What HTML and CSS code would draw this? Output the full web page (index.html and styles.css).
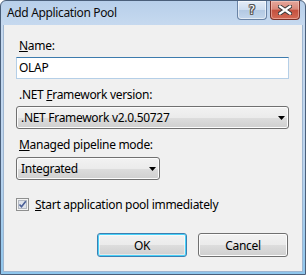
FILE: index.html
```html
<!DOCTYPE html>
<html>
<head>
<meta charset="utf-8">
<link rel="stylesheet" href="styles.css">
</head>
<body>
<div class="window">
  <div class="titlebar">
    <span class="title">Add Application Pool</span>
    <div class="caption-buttons">
      <div class="cap-btn help"><span class="help-glyph">?</span></div>
      <div class="cap-btn close">
        <svg width="14" height="10" viewBox="0 0 14 10">
          <path d="M2 1.5 L12 8.5 M12 1.5 L2 8.5" stroke="#3a3a3a" stroke-width="4.2" stroke-linecap="square" fill="none"/>
          <path d="M2 1.5 L12 8.5 M12 1.5 L2 8.5" stroke="#ffffff" stroke-width="2.2" stroke-linecap="square" fill="none"/>
        </svg>
      </div>
    </div>
  </div>
  <div class="client">
    <div class="label"><u>N</u>ame:</div>
    <div class="textbox">OLAP</div>
    <div class="label label-gap">.NET <u>F</u>ramework version:</div>
    <div class="combo combo-wide">
      <span>.NET Framework v2.0.50727</span>
      <svg class="arrow" width="7" height="4" viewBox="0 0 7 4"><path d="M0 0 H7 L3.5 4 Z" fill="#000"/></svg>
    </div>
    <div class="label label-gap"><u>M</u>anaged pipeline mode:</div>
    <div class="combo combo-narrow">
      <span>Integrated</span>
      <svg class="arrow" width="7" height="4" viewBox="0 0 7 4"><path d="M0 0 H7 L3.5 4 Z" fill="#000"/></svg>
    </div>
    <div class="check-row">
      <span class="checkbox">
        <svg width="13" height="13" viewBox="0 0 13 13">
          <rect x="0.5" y="0.5" width="12" height="12" fill="#f4f4f4" stroke="#8e8f8f"/>
          <rect x="2.5" y="2.5" width="8" height="8" fill="#dfe3ea" stroke="#b4b9c2"/>
          <path d="M3.5 6.5 L5.5 8.8 L9.8 3.2" stroke="#4a5f97" stroke-width="1.6" fill="none"/>
        </svg>
      </span>
      <span class="check-label"><u>S</u>tart application pool immediately</span>
    </div>
    <div class="buttons">
      <div class="btn btn-default">OK</div>
      <div class="btn">Cancel</div>
    </div>
  </div>
</div>
</body>
</html>
```

FILE: styles.css
```css
html, body {
  margin: 0;
  padding: 0;
  background: #ffffff;
}

body {
  font-family: "Noto Sans", "Open Sans", sans-serif;
  font-size: 12px;
  letter-spacing: -0.3px;
  color: #000;
}

.window {
  width: 306px;
  height: 275px;
  box-sizing: border-box;
  border: 1px solid #4a5f7a;
  border-radius: 6px 6px 0 0;
  background: linear-gradient(#b7cfea 0px, #c6d9ef 24px, #bcd4ee 60%, #8fc6ec 100%);
  padding: 0 2px 2px 2px;
  display: flex;
  flex-direction: column;
}

.titlebar {
  height: 24px;
  flex: none;
  display: flex;
  align-items: flex-start;
  justify-content: space-between;
}

.title {
  margin-left: 4px;
  margin-top: 4px;
  line-height: 16px;
  font-size: 12px;
  letter-spacing: -0.35px;
  color: #0b0b0b;
}

.caption-buttons {
  display: flex;
  gap: 3px;
  margin-right: 3px;
}

.cap-btn {
  width: 30px;
  height: 19px;
  box-sizing: border-box;
  border-radius: 0 0 4px 4px;
  display: flex;
  align-items: center;
  justify-content: center;
}

.help {
  border: 1px solid #6983a5;
  border-top: none;
  background: linear-gradient(#e3ecf7 0%, #ccdcef 50%, #b3c9e3 52%, #c3d6ec 100%);
  box-shadow: inset 0 0 0 1px rgba(255,255,255,0.55);
}

.help-glyph {
  font-family: "DejaVu Sans", sans-serif;
  font-size: 12px;
  line-height: 13px;
  letter-spacing: 0;
  color: #fff;
  text-shadow: 1px 0 0 #555, -1px 0 0 #555, 0 1px 0 #555, 0 -1px 0 #555,
               1px 1px 0 #555, -1px -1px 0 #555, 1px -1px 0 #555, -1px 1px 0 #555;
}

.close {
  border: 1px solid #7a2f27;
  border-top: none;
  background: linear-gradient(#e5a79c 0%, #d9887a 45%, #c4513f 52%, #d46a55 100%);
  box-shadow: inset 0 0 0 1px rgba(255,220,210,0.45);
}

.client {
  flex: 1;
  background: #f0f0f0;
  border: 1px solid #9fb6d0;
  border-top: none;
  padding: 13px 13px 0 12px;
  display: flex;
  flex-direction: column;
}

.label {
  line-height: 15px;
  padding-left: 3px;
}

.label-gap {
  margin-top: 8px;
}

.textbox {
  margin-top: 4px;
  height: 22px;
  box-sizing: border-box;
  background: #fff;
  border: 1px solid #b5cfe7;
  border-top-color: #3d7bad;
  padding: 0 2px;
  line-height: 19px;
}

.combo {
  margin-top: 4px;
  height: 23px;
  box-sizing: border-box;
  border: 1px solid #707070;
  border-radius: 3px;
  background: linear-gradient(#f2f2f2 0%, #ebebeb 50%, #dddddd 51%, #cfcfcf 100%);
  box-shadow: inset 0 0 0 1px #fcfcfc;
  display: flex;
  align-items: center;
  justify-content: space-between;
  padding: 0 3px 0 4px;
}

.combo-narrow {
  width: 144px;
  margin-top: 5px;
}

.arrow {
  flex: none;
}

.check-row {
  margin-top: 18px;
  display: flex;
  align-items: center;
  gap: 6px;
  height: 13px;
}

.checkbox {
  width: 13px;
  height: 13px;
  display: block;
  flex: none;
}

.checkbox svg {
  display: block;
}

.check-label {
  line-height: 15px;
}

.buttons {
  margin-top: 22px;
  display: flex;
  justify-content: flex-end;
  gap: 11px;
  padding-right: 1px;
}

.btn {
  width: 90px;
  height: 24px;
  box-sizing: border-box;
  border: 1px solid #707070;
  border-radius: 3px;
  background: linear-gradient(#f2f2f2 0%, #ebebeb 50%, #dddddd 51%, #cfcfcf 100%);
  box-shadow: inset 0 0 0 1px #fcfcfc;
  display: flex;
  align-items: center;
  justify-content: center;
}

.btn-default {
  border-color: #3c7fb1;
  box-shadow: inset 0 0 0 1px #48d1f9, inset 0 0 0 2px rgba(255,255,255,0.5);
}
```
